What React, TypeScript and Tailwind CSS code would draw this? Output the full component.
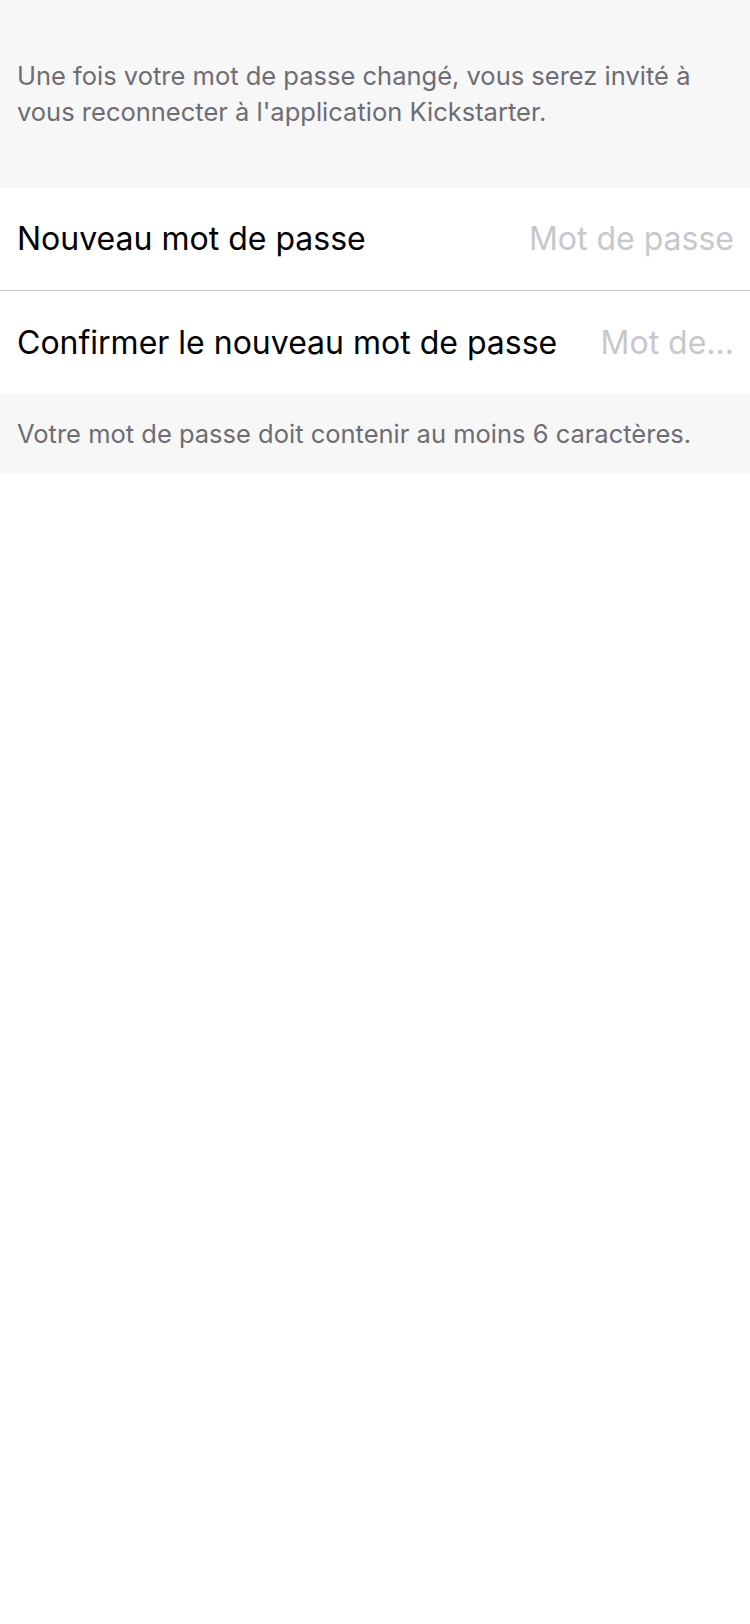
import React from "react";

export default function App() {
  return (
    <div className="min-h-[1624px] w-[750px] bg-white" style={{ fontFamily: "Inter, 'Noto Sans', sans-serif" }}>
      <div className="h-[188px] bg-[#f7f7f7] px-[17px] pt-[58px] text-[25.5px] leading-[36px] text-[#6d6d72]">
        Une fois votre mot de passe changé, vous serez invité à vous reconnecter à l'application Kickstarter.
      </div>
      <div className="flex h-[102px] items-center justify-between pl-[17px] pr-[16px] text-[32px]">
        <span className="text-black">Nouveau mot de passe</span>
        <span className="text-[#c7c7cd]">Mot de passe</span>
      </div>
      <div className="h-px bg-[#c8c7cc]" />
      <div className="flex h-[103px] items-center justify-between gap-[40px] pl-[17px] pr-[16px] text-[32px]">
        <span className="shrink-0 text-black">Confirmer le nouveau mot de passe</span>
        <span className="text-[#c7c7cd]">Mot de...</span>
      </div>
      <div className="flex h-[80px] items-center bg-[#f7f7f7] px-[17px] text-[25.5px] text-[#6d6d72]">
        Votre mot de passe doit contenir au moins 6 caractères.
      </div>
    </div>
  );
}
